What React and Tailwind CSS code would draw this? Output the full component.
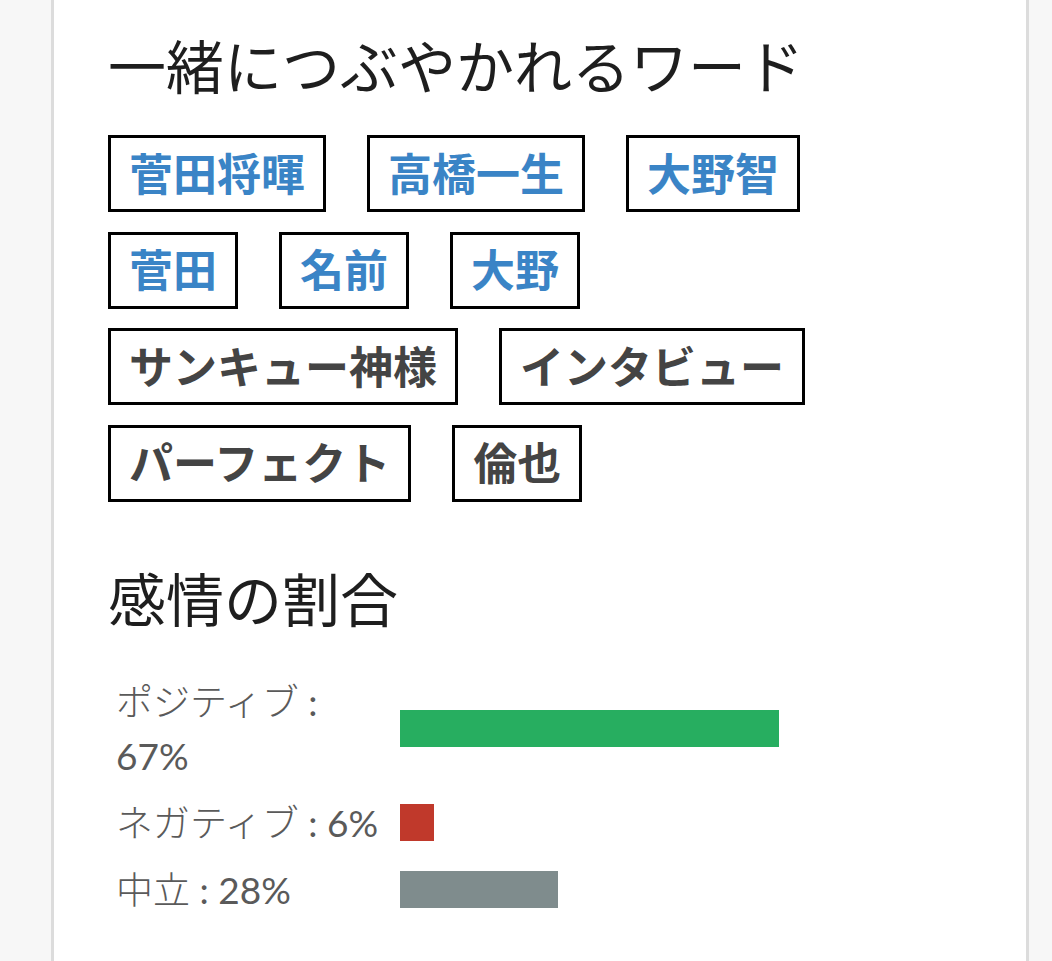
import React from 'react';

// 一緒につぶやかれるワード
const words = [
  { label: '菅田将暉', person: true },
  { label: '高橋一生', person: true },
  { label: '大野智', person: true },
  { label: '菅田', person: true },
  { label: '名前', person: true },
  { label: '大野', person: true },
  { label: 'サンキュー神様', person: false },
  { label: 'インタビュー', person: false },
  { label: 'パーフェクト', person: false },
  { label: '倫也', person: false },
];

// 感情の割合
const emotions = [
  { name: 'ポジティブ', value: 67, color: 'bg-[#27ae60]' },
  { name: 'ネガティブ', value: 6, color: 'bg-[#c0392b]' },
  { name: '中立', value: 28, color: 'bg-[#7f8c8d]' },
];

const WordTag = ({ label, person }) => (
  <span
    className={`flex h-[77px] items-center border-[3px] border-black px-[18px] text-[44px] font-bold leading-none ${
      person ? 'text-[#3a84c6]' : 'text-[#444444]'
    }`}
  >
    {label}
  </span>
);

const EmotionRow = ({ name, value, color }) => (
  <div className="flex items-center">
    <div className="w-[292px] shrink-0 pl-[8px] pr-[12px] text-[37px] font-light leading-[54px] text-[#5a5a5a]">
      {name}
      <span className="font-normal"> : {value}%</span>
    </div>
    <div className="w-[565px] shrink-0">
      <div className={`h-[37px] ${color}`} style={{ width: `${value}%` }} />
    </div>
  </div>
);

export default function App() {
  return (
    <div
      className="min-h-[961px] bg-[#f7f7f7] pl-[51px] pr-[23px]"
      style={{ fontFamily: "Lato, 'Noto Sans CJK JP', sans-serif" }}
    >
      <div className="min-h-[961px] border-x-[3px] border-[#dcdcdc] bg-white pl-[54px] pr-[50px] pt-[26px]">
        <h2 className="text-[58px] font-normal leading-[1.4] text-[#1e1e1e]">
          一緒につぶやかれるワード
        </h2>
        <div className="mt-[28px] flex flex-wrap gap-x-[41px] gap-y-[19.5px] pr-[30px]">
          {words.map((w) => (
            <WordTag key={w.label} {...w} />
          ))}
        </div>

        <h2 className="mt-[57px] text-[58px] font-normal leading-[1.4] text-[#1e1e1e]">
          感情の割合
        </h2>
        <div className="mt-[35px] flex flex-col gap-[13px]">
          {emotions.map((e) => (
            <EmotionRow key={e.name} {...e} />
          ))}
        </div>
      </div>
    </div>
  );
}
